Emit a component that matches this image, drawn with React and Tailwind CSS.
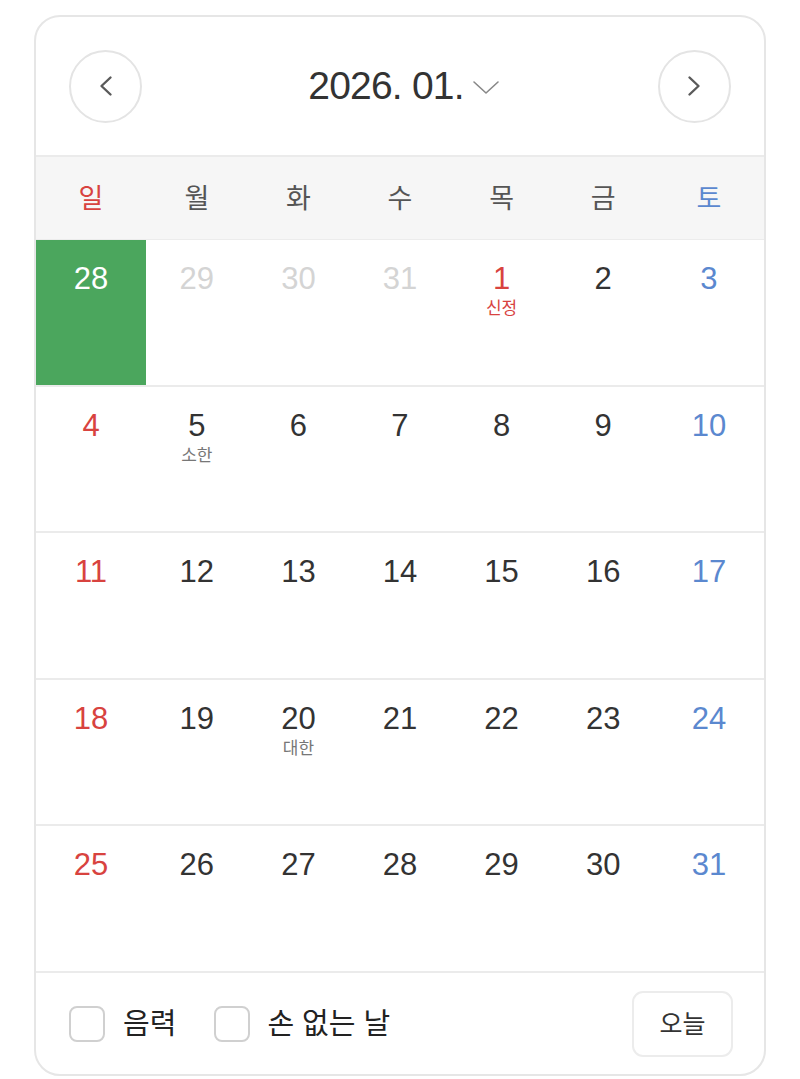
const font = { fontFamily: '"Liberation Sans", "Noto Sans CJK KR", sans-serif' };

const weekdays = ['일', '월', '화', '수', '목', '금', '토'];

// 날짜 데이터: muted = 이전 달, label = 절기/공휴일
const weeks = [
  [
    { d: 28, selected: true },
    { d: 29, muted: true },
    { d: 30, muted: true },
    { d: 31, muted: true },
    { d: 1, holiday: true, label: '신정' },
    { d: 2 },
    { d: 3 },
  ],
  [{ d: 4 }, { d: 5, label: '소한' }, { d: 6 }, { d: 7 }, { d: 8 }, { d: 9 }, { d: 10 }],
  [{ d: 11 }, { d: 12 }, { d: 13 }, { d: 14 }, { d: 15 }, { d: 16 }, { d: 17 }],
  [{ d: 18 }, { d: 19 }, { d: 20, label: '대한' }, { d: 21 }, { d: 22 }, { d: 23 }, { d: 24 }],
  [{ d: 25 }, { d: 26 }, { d: 27 }, { d: 28 }, { d: 29 }, { d: 30 }, { d: 31 }],
];

function dayColor(day, col) {
  if (day.selected) return 'text-white';
  if (day.muted) return 'text-[#d4d4d4]';
  if (day.holiday || col === 0) return 'text-[#d8433f]';
  if (col === 6) return 'text-[#5b88cf]';
  return 'text-[#333333]';
}

function Arrow({ dir }) {
  return (
    <svg width="14" height="22" viewBox="0 0 14 22" fill="none">
      <path
        d={dir === 'left' ? 'M11.5 2.5 L2.5 11 L11.5 19.5' : 'M2.5 2.5 L11.5 11 L2.5 19.5'}
        stroke="currentColor"
        strokeWidth="2.4"
        strokeLinecap="round"
        strokeLinejoin="round"
      />
    </svg>
  );
}

export default function App() {
  return (
    <div className="w-[800px] h-[1079px] bg-white pt-[15px] px-[34px]" style={font}>
      <div className="w-[732px] h-[1061px] border-2 border-[#e6e6e6] rounded-[26px] overflow-hidden flex flex-col">

        {/* 헤더 */}
        <div className="h-[140px] shrink-0 flex items-center justify-between px-[33px] border-b-2 border-[#ebebeb]">
          <button className="w-[73px] h-[73px] rounded-full border-2 border-[#e4e4e4] flex items-center justify-center text-[#5a5a5a]">
            <Arrow dir="left" />
          </button>
          <div className="flex items-center gap-[8px] pl-[8px]">
            <span className="text-[39px] text-[#333] tracking-[-0.8px]">2026. 01.</span>
            <svg width="28" height="16" viewBox="0 0 28 16" fill="none" className="text-[#888] mt-[2px]">
              <path d="M2 3 L14 14 L26 3" stroke="currentColor" strokeWidth="1.6" strokeLinecap="round" strokeLinejoin="round" />
            </svg>
          </div>
          <button className="w-[73px] h-[73px] rounded-full border-2 border-[#e4e4e4] flex items-center justify-center text-[#5a5a5a]">
            <Arrow dir="right" />
          </button>
        </div>

        {/* 요일 */}
        <div className="h-[83px] shrink-0 bg-[#f6f6f6] grid grid-cols-[110px_repeat(5,1fr)_110px] items-center border-b border-[#ececec]">
          {weekdays.map((w, i) => (
            <div
              key={w}
              className={`text-center text-[27px] pt-[2px] ${i === 0 ? 'text-[#d8433f]' : i === 6 ? 'text-[#5b88cf]' : 'text-[#555]'}`}
            >
              {w}
            </div>
          ))}
        </div>

        {/* 날짜 */}
        <div className="flex flex-col shrink-0">
          {weeks.map((week, r) => (
            <div key={r} className="h-[146.6px] grid grid-cols-[110px_repeat(5,1fr)_110px] border-b-2 border-[#ebebeb]">
              {week.map((day, c) => (
                <div
                  key={c}
                  className={`flex flex-col items-center pt-[20px] ${day.selected ? 'bg-[#4ba65d]' : ''}`}
                >
                  <span className={`text-[31px] leading-[38px] ${dayColor(day, c)}`}>{day.d}</span>
                  {day.label && (
                    <span className={`text-[17px] leading-[22px] ${day.holiday ? 'text-[#d8433f]' : 'text-[#777]'}`}>
                      {day.label}
                    </span>
                  )}
                </div>
              ))}
            </div>
          ))}
        </div>

        {/* 하단 */}
        <div className="flex-1 flex items-center justify-between pl-[33px] pr-[31px] pt-[2px]">
          <div className="flex items-center">
            <label className="flex items-center gap-[18px]">
              <span className="w-[36px] h-[36px] rounded-[8px] border-2 border-[#d0d0d0]" />
              <span className="text-[29px] text-[#222]">음력</span>
            </label>
            <label className="flex items-center gap-[17px] ml-[38px]">
              <span className="w-[36px] h-[36px] rounded-[8px] border-2 border-[#d0d0d0]" />
              <span className="text-[29px] text-[#222]">손 없는 날</span>
            </label>
          </div>
          <button className="w-[101px] h-[66px] rounded-[11px] border-2 border-[#ececec] text-[25px] text-[#333]">
            오늘
          </button>
        </div>
      </div>
    </div>
  );
}
